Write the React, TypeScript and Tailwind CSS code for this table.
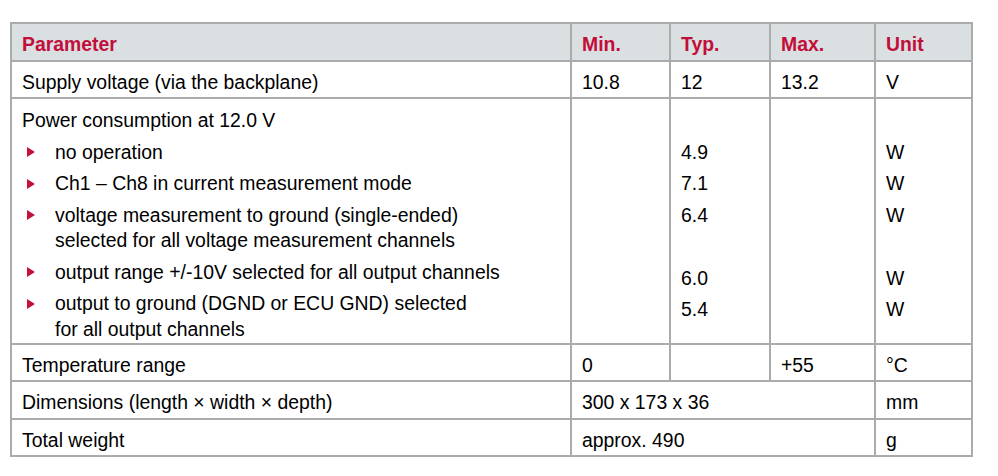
const head = "bg-[#dadfe2] pl-[10px] pt-[9px] font-bold text-[#c20e3a]";
const cell = "bg-white pl-[10px] pt-[9px]";

const items: string[][] = [
  ["no operation"],
  ["Ch1 – Ch8 in current measurement mode"],
  ["voltage measurement to ground (single-ended)", "selected for all voltage measurement channels"],
  ["output range +/-10V selected for all output channels"],
  ["output to ground (DGND or ECU GND) selected", "for all output channels"],
];

// typ values line up on their own 31.5px grid, not with the bullet text
const typValues = ["", "4.9", "7.1", "6.4", "", "6.0", "5.4"];
const unitValues = ["", "W", "W", "W", "", "W", "W"];

function Bullet() {
  return (
    <svg width="8" height="10" viewBox="0 0 8 10" className="shrink-0">
      <path d="M0 0 L8 5 L0 10 Z" fill="#c4103f" />
    </svg>
  );
}

function StackedColumn({ values }: { values: string[] }) {
  return (
    <div className="bg-white pl-[10px] pt-[6px] leading-[31.5px]">
      {values.map((v, i) => (
        <div key={i} className="h-[31.5px]">
          {v}
        </div>
      ))}
    </div>
  );
}

export default function App() {
  return (
    <div className="min-h-screen bg-white pl-[10px] pt-[22px] font-['Liberation_Sans',Arial,sans-serif] text-[19.4px] leading-[23px] text-black">
      <div className="grid w-fit grid-cols-[558px_97px_98px_103px_95px] grid-rows-[36px_35px_244px_35px_36px_35px] gap-[2px] bg-[#ababab] p-[2px]">
        <div className={head}>Parameter</div>
        <div className={head}>Min.</div>
        <div className={head}>Typ.</div>
        <div className={head}>Max.</div>
        <div className={head}>Unit</div>

        <div className={cell}>Supply voltage (via the backplane)</div>
        <div className={cell}>10.8</div>
        <div className={cell}>12</div>
        <div className={cell}>13.2</div>
        <div className={cell}>V</div>

        <div className="bg-white pl-[10px] pt-[9px] leading-[25.5px]">
          <div>Power consumption at 12.0 V</div>
          <ul className="mt-[6px] flex flex-col gap-[6px]">
            {items.map((lines, i) => (
              <li key={i} className="flex items-start">
                <span className="flex h-[25.5px] w-[33px] items-center pl-[5px]">
                  <Bullet />
                </span>
                <span>
                  {lines.map((l, j) => (
                    <div key={j}>{l}</div>
                  ))}
                </span>
              </li>
            ))}
          </ul>
        </div>
        <div className="bg-white" />
        <StackedColumn values={typValues} />
        <div className="bg-white" />
        <StackedColumn values={unitValues} />

        <div className={cell}>Temperature range</div>
        <div className={cell}>0</div>
        <div className={cell} />
        <div className={cell}>+55</div>
        <div className={cell}>°C</div>

        <div className={cell}>Dimensions (length × width × depth)</div>
        <div className={`${cell} col-span-3`}>300 x 173 x 36</div>
        <div className={cell}>mm</div>

        <div className={cell}>Total weight</div>
        <div className={`${cell} col-span-3`}>approx. 490</div>
        <div className={cell}>g</div>
      </div>
    </div>
  );
}
